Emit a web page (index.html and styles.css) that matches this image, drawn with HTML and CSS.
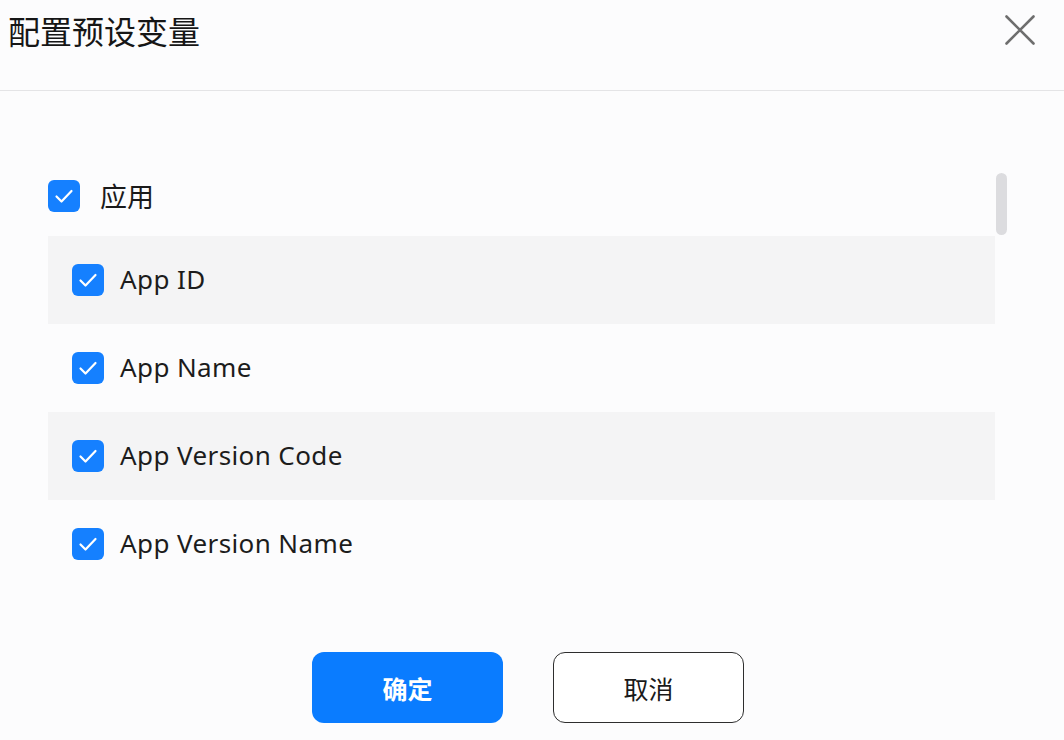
FILE: index.html
```html
<!DOCTYPE html>
<html lang="zh-CN">
<head>
<meta charset="utf-8">
<title>配置预设变量</title>
<link rel="stylesheet" href="styles.css">
</head>
<body>
<div class="dialog">
  <header class="head">
    <h1 class="title">配置预设变量</h1>
    <button class="close" aria-label="关闭">
      <svg width="30" height="30" viewBox="0 0 30 30"><path d="M1.5 1.5 L28.5 28.5 M28.5 1.5 L1.5 28.5" stroke="#6e6e6e" stroke-width="2.6" stroke-linecap="round" fill="none"/></svg>
    </button>
  </header>
  <main class="body">
    <div class="list">
      <label class="group">
        <span class="cb"><svg viewBox="0 0 32 32"><path d="M8.5 16.5 L13.5 21.5 L23.5 11" stroke="#fff" stroke-width="2.2" fill="none" stroke-linecap="round" stroke-linejoin="round"/></svg></span>
        <span class="group-label">应用</span>
      </label>
      <label class="row alt">
        <span class="cb"><svg viewBox="0 0 32 32"><path d="M8.5 16.5 L13.5 21.5 L23.5 11" stroke="#fff" stroke-width="2.2" fill="none" stroke-linecap="round" stroke-linejoin="round"/></svg></span>
        <span class="row-label">App ID</span>
      </label>
      <label class="row">
        <span class="cb"><svg viewBox="0 0 32 32"><path d="M8.5 16.5 L13.5 21.5 L23.5 11" stroke="#fff" stroke-width="2.2" fill="none" stroke-linecap="round" stroke-linejoin="round"/></svg></span>
        <span class="row-label">App Name</span>
      </label>
      <label class="row alt">
        <span class="cb"><svg viewBox="0 0 32 32"><path d="M8.5 16.5 L13.5 21.5 L23.5 11" stroke="#fff" stroke-width="2.2" fill="none" stroke-linecap="round" stroke-linejoin="round"/></svg></span>
        <span class="row-label">App Version Code</span>
      </label>
      <label class="row">
        <span class="cb"><svg viewBox="0 0 32 32"><path d="M8.5 16.5 L13.5 21.5 L23.5 11" stroke="#fff" stroke-width="2.2" fill="none" stroke-linecap="round" stroke-linejoin="round"/></svg></span>
        <span class="row-label">App Version Name</span>
      </label>
    </div>
    <div class="scrollbar"><div class="thumb"></div></div>
  </main>
  <footer class="foot">
    <button class="btn primary">确定</button>
    <button class="btn ghost">取消</button>
  </footer>
</div>
</body>
</html>
```
FILE: styles.css
```css
* { box-sizing: border-box; }
html, body {
  margin: 0;
  padding: 0;
  background: #fcfcfd;
}
body {
  width: 1064px;
  height: 740px;
  overflow: hidden;
  font-family: "Noto Sans", "Noto Sans CJK SC", sans-serif;
  color: #1a1a1a;
}
.dialog {
  display: flex;
  flex-direction: column;
  height: 740px;
}
.head {
  height: 91px;
  border-bottom: 1px solid #e4e4e6;
  display: flex;
  align-items: flex-start;
  justify-content: space-between;
  padding: 11px 29px 0 8px;
}
.title {
  margin: 0;
  font-family: "Noto Sans CJK SC", sans-serif;
  font-weight: 400;
  font-size: 32px;
  line-height: 38px;
  color: #161616;
}
.close {
  border: 0;
  background: none;
  padding: 0;
  margin-top: 4px;
  width: 30px;
  height: 30px;
  display: block;
}
.close svg { display: block; }
.body {
  display: flex;
  padding-left: 48px;
  padding-top: 65px;
}
.list {
  width: 947px;
  display: flex;
  flex-direction: column;
}
.group {
  height: 80px;
  display: flex;
  align-items: center;
  gap: 20px;
}
.group-label {
  font-family: "Noto Sans CJK SC", sans-serif;
  font-size: 27px;
  line-height: 32px;
  color: #1a1a1a;
}
.row {
  height: 88px;
  display: flex;
  align-items: center;
  padding-left: 24px;
  gap: 16px;
}
.row.alt { background: #f4f4f5; }
.row-label {
  font-size: 26px;
  line-height: 32px;
  color: #1c1c1c;
  letter-spacing: 0.4px;
  margin-top: -2px;
}
.cb {
  width: 32px;
  height: 32px;
  border-radius: 6px;
  background: #1580ff;
  flex: none;
  display: block;
}
.cb svg { width: 32px; height: 32px; display: block; }
.scrollbar {
  width: 11px;
  margin-left: 1px;
  padding-top: 17px;
}
.thumb {
  width: 11px;
  height: 62px;
  border-radius: 6px;
  background: #dcdcdf;
}
.foot {
  display: flex;
  justify-content: center;
  gap: 50px;
  padding-top: 64px;
  padding-right: 8px;
}
.btn {
  width: 191px;
  height: 71px;
  border-radius: 12px;
  font-family: "Noto Sans CJK SC", sans-serif;
  font-size: 25px;
  cursor: pointer;
}
.primary {
  background: #0a7cff;
  border: 0;
  color: #fff;
  font-weight: 700;
}
.ghost {
  background: #fff;
  border: 1.5px solid #2e2e2e;
  color: #1a1a1a;
}
```
